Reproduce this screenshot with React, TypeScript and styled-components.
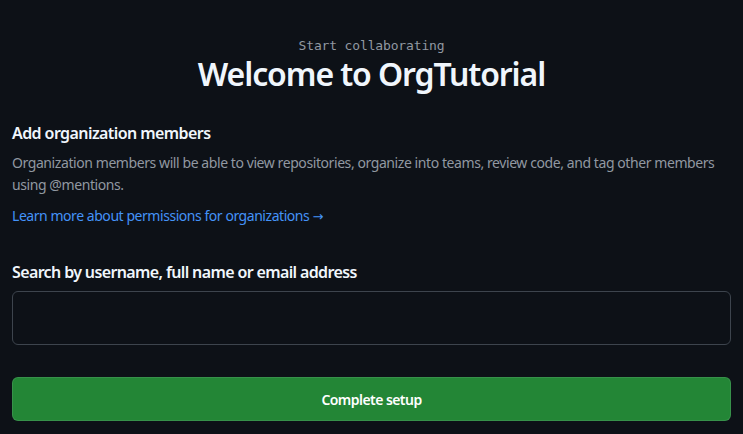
import React from "react";
import styled, { createGlobalStyle } from "styled-components";

const Global = createGlobalStyle`
  html, body { margin: 0; padding: 0; background: #0d1117; }
  body { font-family: "Noto Sans", "Liberation Sans", sans-serif; color: #f0f6fc; }
  * { box-sizing: border-box; }
`;

const Page = styled.div`
  width: 743px;
  height: 434px;
  padding: 36px 12px 0;
  display: flex;
  flex-direction: column;
`;

const Header = styled.header`
  display: flex;
  flex-direction: column;
  align-items: center;
`;

const Eyebrow = styled.div`
  font-family: "DejaVu Sans Mono", "Liberation Mono", monospace;
  font-size: 13px;
  line-height: 20px;
  color: #9198a1;
  letter-spacing: -0.15px;
`;

const Title = styled.h1`
  margin: 0;
  font-size: 32px;
  line-height: 36px;
  font-weight: 600;
  color: #f0f6fc;
  letter-spacing: -1.1px;
`;

const Section = styled.section`
  margin-top: 29px;
`;

const SectionTitle = styled.h2`
  margin: 0;
  font-size: 16px;
  line-height: 24px;
  font-weight: 600;
  color: #f0f6fc;
  letter-spacing: -0.58px;
`;

const Description = styled.p`
  margin: 7px 0 0;
  font-size: 14px;
  line-height: 22px;
  color: #9198a1;
  letter-spacing: -0.42px;
`;

const Link = styled.a`
  display: inline-block;
  margin-top: 9px;
  font-size: 14px;
  line-height: 22px;
  color: #4493f8;
  text-decoration: none;
  letter-spacing: -0.45px;
`;

const Arrow = styled.span`
  font-family: "DejaVu Sans", sans-serif;
  font-size: 13px;
  letter-spacing: 0;
`;

const Field = styled.div`
  margin-top: 32px;
  display: flex;
  flex-direction: column;
  gap: 7px;
`;

const Label = styled.label`
  font-size: 16px;
  line-height: 24px;
  font-weight: 600;
  color: #f0f6fc;
  letter-spacing: -0.63px;
`;

const Input = styled.input`
  height: 54px;
  width: 100%;
  background: #0d1117;
  border: 1px solid #3d444d;
  border-radius: 6px;
  color: #f0f6fc;
  font-size: 14px;
  padding: 0 12px;
  outline: none;
`;

const Button = styled.button`
  margin-top: 32px;
  height: 44px;
  width: 100%;
  background: #238636;
  border: 1px solid rgba(240, 246, 252, 0.1);
  border-radius: 6px;
  color: #ffffff;
  font-family: "Noto Sans", "Liberation Sans", sans-serif;
  font-size: 14px;
  font-weight: 600;
  letter-spacing: -0.55px;
  cursor: pointer;
`;

export default function App() {
  return (
    <>
      <Global />
      <Page>
        <Header>
          <Eyebrow>Start collaborating</Eyebrow>
          <Title>Welcome to OrgTutorial</Title>
        </Header>
        <Section>
          <SectionTitle>Add organization members</SectionTitle>
          <Description>
            Organization members will be able to view repositories, organize into teams, review code, and tag other members using @mentions.
          </Description>
          <Link href="#">
            Learn more about permissions for organizations <Arrow>→</Arrow>
          </Link>
        </Section>
        <Field>
          <Label htmlFor="search">Search by username, full name or email address</Label>
          <Input id="search" type="text" />
        </Field>
        <Button type="button">Complete setup</Button>
      </Page>
    </>
  );
}
